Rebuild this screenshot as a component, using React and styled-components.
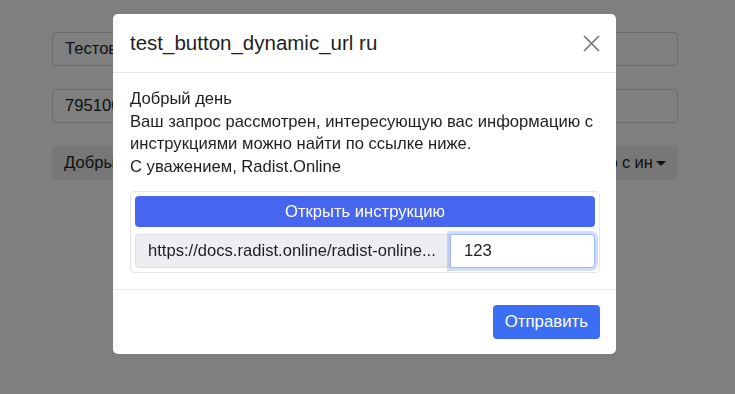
import React from "react";
import styled, { createGlobalStyle } from "styled-components";

const GlobalStyle = createGlobalStyle`
  * { box-sizing: border-box; }
  body {
    margin: 0;
    background: #ffffff;
    font-family: "Liberation Sans", Arial, sans-serif;
    color: #212529;
  }
`;

/* page behind the dialog */
const Page = styled.div`
  display: flex;
  flex-direction: column;
  gap: 23px;
  padding: 32px 57px 0 52px;
  height: 394px;
`;

const Field = styled.div`
  height: 34px;
  border: 1px solid #ced4da;
  border-radius: 4px;
  padding: 0 12px;
  display: flex;
  align-items: center;
  font-size: 16.6px;
`;

const Dropdown = styled.div`
  height: 34px;
  background: #eeeeee;
  border-radius: 4px;
  padding: 0 12px;
  display: flex;
  align-items: center;
  gap: 4px;
  font-size: 16.6px;
  &::after {
    content: "";
    border-top: 5px solid #212529;
    border-left: 5px solid transparent;
    border-right: 5px solid transparent;
  }
`;

const DropdownText = styled.span`
  flex: 1;
  white-space: nowrap;
  overflow: hidden;
  word-spacing: -0.4px;
`;

/* dialog */
const Backdrop = styled.div`
  position: fixed;
  inset: 0;
  background: rgba(0, 0, 0, 0.5);
  display: flex;
  justify-content: center;
  align-items: flex-start;
  padding-top: 14px;
  padding-right: 6px;
`;

const Modal = styled.div`
  width: 503px;
  background: #fff;
  border-radius: 5px;
  display: flex;
  flex-direction: column;
`;

const Header = styled.div`
  height: 59px;
  display: flex;
  align-items: center;
  justify-content: space-between;
  padding: 0 16px 0 17px;
  border-bottom: 1px solid #e6e6e6;
`;

const Title = styled.h5`
  margin: 0;
  font-size: 20.5px;
  font-weight: 400;
  color: #1e1e1e;
`;

const Close = styled.button`
  border: none;
  background: none;
  padding: 0;
  width: 17px;
  height: 17px;
  display: flex;
  cursor: pointer;
`;

const Body = styled.div`
  padding: 15px 16px 16px 17px;
`;

const Text = styled.p`
  margin: 0 0 13px;
  font-size: 16.6px;
  line-height: 22.5px;
  color: #1e1e1e;
`;

const Card = styled.div`
  border: 1px solid #e6e6ea;
  border-radius: 4px;
  padding: 4px;
  display: flex;
  flex-direction: column;
  gap: 7px;
`;

const OpenButton = styled.button`
  height: 31px;
  border: none;
  border-radius: 4px;
  background: #4766ef;
  color: #fff;
  font-family: inherit;
  font-size: 16.6px;
`;

const Group = styled.div`
  display: flex;
  height: 34px;
`;

const Prefix = styled.span`
  flex: 0 0 315px;
  background: #eceef1;
  border: 1px solid #dcdfe4;
  border-radius: 4px 0 0 4px;
  display: flex;
  align-items: center;
  padding: 0 12px;
  font-size: 16.6px;
  color: #1e1e1e;
  white-space: nowrap;
  overflow: hidden;
`;

const Input = styled.input`
  flex: 1;
  min-width: 0;
  border: 1px solid #9fb8f7;
  border-radius: 0 4px 4px 0;
  box-shadow: 0 0 0 3px rgba(70, 110, 240, 0.25);
  padding: 0 13px;
  font-family: inherit;
  font-size: 16.6px;
  color: #1e1e1e;
  outline: none;
`;

const Footer = styled.div`
  border-top: 1px solid #e6e6e6;
  display: flex;
  justify-content: flex-end;
  padding: 15px 16px 15px 16px;
`;

const SendButton = styled.button`
  height: 34px;
  padding: 0 12px;
  border: none;
  border-radius: 4px;
  background: #3b6ef2;
  color: #fff;
  font-family: inherit;
  font-size: 16.8px;
`;

export default function App() {
  return (
    <>
      <GlobalStyle />
      <Page>
        <Field>Тестовое сообщение</Field>
        <Field>79510000000</Field>
        <Dropdown>
          <DropdownText>
            Добрый день Ваш запрос рассмотрен, интересующую вас информацию с инструкциями
          </DropdownText>
        </Dropdown>
      </Page>
      <Backdrop>
        <Modal>
          <Header>
            <Title>test_button_dynamic_url ru</Title>
            <Close aria-label="Закрыть">
              <svg width="17" height="17" viewBox="0 0 17 17">
                <path d="M1 1L16 16M16 1L1 16" stroke="#777" strokeWidth="1.7" />
              </svg>
            </Close>
          </Header>
          <Body>
            <Text>
              Добрый день
              <br />
              Ваш запрос рассмотрен, интересующую вас информацию с инструкциями можно найти по ссылке ниже.
              <br />
              С уважением, Radist.Online
            </Text>
            <Card>
              <OpenButton>Открыть инструкцию</OpenButton>
              <Group>
                <Prefix>https://docs.radist.online/radist-online...</Prefix>
                <Input defaultValue="123" />
              </Group>
            </Card>
          </Body>
          <Footer>
            <SendButton>Отправить</SendButton>
          </Footer>
        </Modal>
      </Backdrop>
    </>
  );
}
